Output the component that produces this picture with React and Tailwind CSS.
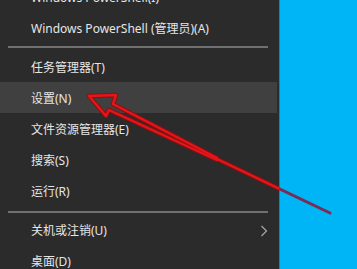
import React from "react";

const font = { fontFamily: '"Noto Sans", "Noto Sans CJK SC", sans-serif' };

function Item({ label, active, chevron }) {
  return (
    <div
      className={
        "relative h-[31px] flex items-center pl-[31px] pt-[3px] text-[12px] text-[#e6e6e6] " +
        (active ? "bg-[#404040] mr-[2px]" : "")
      }
    >
      <span className="leading-none whitespace-nowrap">{label}</span>
      {chevron && (
        <svg
          className="absolute left-[260px] top-[11px]"
          width="8"
          height="12"
          viewBox="0 0 8 12"
        >
          <path d="M1.5 1 L6.5 6 L1.5 11" fill="none" stroke="#a8a8a8" strokeWidth="1.2" />
        </svg>
      )}
    </div>
  );
}

function Sep({ pt, pb }) {
  return (
    <div className={pt + " " + pb}>
      <div className="ml-[8px] w-[260px] h-[2px] bg-[#707070]" />
    </div>
  );
}

export default function App() {
  return (
    <div className="relative w-[357px] h-[269px] overflow-hidden flex" style={font}>
      <div className="w-[279px] h-full bg-[#2b2b2b] flex flex-col">
        <div className="mt-[-19px]">
          <Item label="Windows PowerShell(I)" />
          <Item label="Windows PowerShell (管理员)(A)" />
          <Sep pt="pt-[3px]" pb="pb-[3px]" />
          <Item label="任务管理器(T)" />
          <Item label="设置(N)" active />
          <Item label="文件资源管理器(E)" />
          <Item label="搜索(S)" />
          <Item label="运行(R)" />
          <Sep pt="pt-[5px]" pb="pb-[1px]" />
          <Item label="关机或注销(U)" chevron />
          <Item label="桌面(D)" />
        </div>
      </div>
      <div className="w-[1px] h-full bg-[#5d6a70]" />
      <div className="flex-1 h-full bg-[#00b5f6]" />
      <svg
        className="absolute left-0 top-0 pointer-events-none"
        width="357"
        height="269"
        viewBox="0 0 357 269"
      >
        <defs>
          <clipPath id="dark">
            <rect x="0" y="0" width="279" height="269" />
          </clipPath>
          <clipPath id="blue">
            <rect x="279" y="0" width="78" height="269" />
          </clipPath>
        </defs>
        <g clipPath="url(#dark)" fill="none" strokeLinejoin="round" strokeLinecap="round">
          <g stroke="#8c0f12" strokeWidth="4.4">
            <polyline points="113,104 116,95 89,96 106,116 109,110" />
            <polyline points="113,104 217,158" />
            <polyline points="109,110 217,160" />
            <polyline points="217,159 330,213" />
          </g>
          <g stroke="#e3161a" strokeWidth="2.4">
            <polyline points="113,104 116,95 89,96 106,116 109,110" />
            <polyline points="113,104 217,158" />
            <polyline points="109,110 217,160" />
            <polyline points="217,159 330,213" />
          </g>
        </g>
        <g clipPath="url(#blue)" fill="none" strokeLinecap="round">
          <polyline points="217,159 330,213" stroke="#7b2c52" strokeWidth="3" />
        </g>
      </svg>
    </div>
  );
}
